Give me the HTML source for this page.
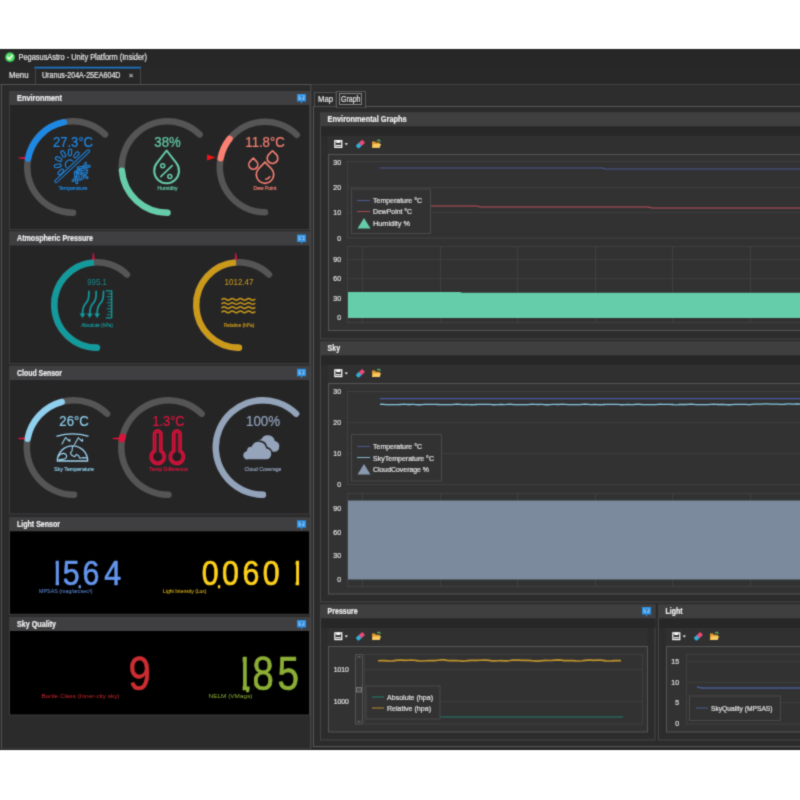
<!DOCTYPE html>
<html lang="en"><head><meta charset="utf-8"><title>PegasusAstro - Unity Platform (Insider)</title>
<style>html,body{margin:0;padding:0;background:#fff;}body{width:800px;height:800px;overflow:hidden;position:relative;}svg{position:absolute;left:0;top:0;display:block;font-family:"Liberation Sans", sans-serif;}</style>
</head><body>
<svg width="800" height="800" viewBox="0 0 800 800">
<defs><filter id="soft" x="-10" y="-10" width="820" height="820" filterUnits="userSpaceOnUse" color-interpolation-filters="sRGB"><feConvolveMatrix order="3" kernelMatrix="0.0275 0.1100 0.0275 0.1100 0.4500 0.1100 0.0275 0.1100 0.0275" edgeMode="duplicate" preserveAlpha="true"/></filter></defs>
<rect x="0" y="0" width="800" height="800" fill="#ffffff" />
<g filter="url(#soft)">
<rect x="-10" y="-10" width="820" height="820" fill="#ffffff" />
<rect x="-10" y="49" width="820" height="701" fill="#2d2d2d" />
<g id="titlebar">
<rect x="-10" y="49" width="820" height="17" fill="#272727" />
<rect x="-10" y="49" width="820" height="1" fill="#1e1e1e" />
<circle cx="10" cy="57.2" r="5" fill="#2fae48"/><circle cx="10" cy="57.2" r="3.9" fill="#5fe070"/><path d="M7.7,57.2 L9.4,59.1 L12.3,55.5" fill="none" stroke="#fff" stroke-width="1.4" stroke-linecap="round" stroke-linejoin="round"/>
<text x="18.5" y="60" font-size="9" fill="#e8e8e8" textLength="128.5" lengthAdjust="spacingAndGlyphs" stroke="#e8e8e8" stroke-width="0.2" >PegasusAstro - Unity Platform (Insider)</text>
</g>
<g id="tabs">
<rect x="-10" y="66" width="820" height="18.5" fill="#282828" />
<text x="9" y="78" font-size="8.5" fill="#e8e8e8" textLength="19.5" lengthAdjust="spacingAndGlyphs" stroke="#e8e8e8" stroke-width="0.2" >Menu</text>
<rect x="35" y="67" width="106" height="17.5" fill="#272727" />
<rect x="34.5" y="66.8" width="106.5" height="1.7" fill="#1b76c8" />
<line x1="35.5" y1="69" x2="35.5" y2="84" stroke="#464646" stroke-width="1" />
<line x1="140.5" y1="69" x2="140.5" y2="84" stroke="#464646" stroke-width="1" />
<text x="42" y="78" font-size="8.5" fill="#e8e8e8" textLength="78.5" lengthAdjust="spacingAndGlyphs" stroke="#e8e8e8" stroke-width="0.2" >Uranus-204A-25EA604D</text>
<text x="131" y="78.3" font-size="8" fill="#cccccc" text-anchor="middle" stroke="#cccccc" stroke-width="0.2" >×</text>
<line x1="-10" y1="84.5" x2="35" y2="84.5" stroke="#404040" stroke-width="1" />
<line x1="141" y1="84.5" x2="810" y2="84.5" stroke="#404040" stroke-width="1" />
</g>
<g id="left-panels">
<rect x="1.5" y="84.5" width="309.3" height="664.5" fill="#2b2b2c" stroke="#525253" stroke-width="1" />
<rect x="9.5" y="91.5" width="300" height="138.0" fill="#252526" stroke="#3c3c3d" stroke-width="1" />
<rect x="10" y="91" width="300" height="14" fill="#3f3f41" />
<text x="17" y="100.7" font-size="8.4" fill="#f0f0f0" font-weight="bold" textLength="45" lengthAdjust="spacingAndGlyphs" stroke="#f0f0f0" stroke-width="0.2" >Environment</text>
<g transform="translate(297,94)"><path d="M0,0H9V7.5H5.5L4,10V7.5H0Z" fill="#2b8fe0"/><rect x="1.5" y="1.5" width="6" height="4.5" fill="#6fb8f5"/>
<text x="4.5" y="6" font-size="5.5" fill="#1560a8" text-anchor="middle" font-weight="bold" >?</text>
</g>
<rect x="9.5" y="232.0" width="300" height="131.5" fill="#252526" stroke="#3c3c3d" stroke-width="1" />
<rect x="10" y="231.5" width="300" height="14.0" fill="#3f3f41" />
<text x="17" y="241.2" font-size="8.4" fill="#f0f0f0" font-weight="bold" textLength="76" lengthAdjust="spacingAndGlyphs" stroke="#f0f0f0" stroke-width="0.2" >Atmospheric Pressure</text>
<g transform="translate(297,234.5)"><path d="M0,0H9V7.5H5.5L4,10V7.5H0Z" fill="#2b8fe0"/><rect x="1.5" y="1.5" width="6" height="4.5" fill="#6fb8f5"/>
<text x="4.5" y="6" font-size="5.5" fill="#1560a8" text-anchor="middle" font-weight="bold" >?</text>
</g>
<rect x="9.5" y="366.3" width="300" height="147.7" fill="#252526" stroke="#3c3c3d" stroke-width="1" />
<rect x="10" y="365.8" width="300" height="14.199999999999989" fill="#3f3f41" />
<text x="17" y="375.5" font-size="8.4" fill="#f0f0f0" font-weight="bold" textLength="45" lengthAdjust="spacingAndGlyphs" stroke="#f0f0f0" stroke-width="0.2" >Cloud Sensor</text>
<g transform="translate(297,368.8)"><path d="M0,0H9V7.5H5.5L4,10V7.5H0Z" fill="#2b8fe0"/><rect x="1.5" y="1.5" width="6" height="4.5" fill="#6fb8f5"/>
<text x="4.5" y="6" font-size="5.5" fill="#1560a8" text-anchor="middle" font-weight="bold" >?</text>
</g>
<rect x="9.5" y="517.7" width="300" height="96.59999999999991" fill="#000000" stroke="#3c3c3d" stroke-width="1" />
<rect x="10" y="517.2" width="300" height="14.099999999999909" fill="#3f3f41" />
<text x="17" y="526.9000000000001" font-size="8.4" fill="#f0f0f0" font-weight="bold" textLength="43" lengthAdjust="spacingAndGlyphs" stroke="#f0f0f0" stroke-width="0.2" >Light Sensor</text>
<g transform="translate(297,520.2)"><path d="M0,0H9V7.5H5.5L4,10V7.5H0Z" fill="#2b8fe0"/><rect x="1.5" y="1.5" width="6" height="4.5" fill="#6fb8f5"/>
<text x="4.5" y="6" font-size="5.5" fill="#1560a8" text-anchor="middle" font-weight="bold" >?</text>
</g>
<rect x="9.5" y="617.5" width="300" height="97.5" fill="#000000" stroke="#3c3c3d" stroke-width="1" />
<rect x="10" y="617" width="300" height="14" fill="#3f3f41" />
<text x="17" y="626.7" font-size="8.4" fill="#f0f0f0" font-weight="bold" textLength="39" lengthAdjust="spacingAndGlyphs" stroke="#f0f0f0" stroke-width="0.2" >Sky Quality</text>
<g transform="translate(297,620)"><path d="M0,0H9V7.5H5.5L4,10V7.5H0Z" fill="#2b8fe0"/><rect x="1.5" y="1.5" width="6" height="4.5" fill="#6fb8f5"/>
<text x="4.5" y="6" font-size="5.5" fill="#1560a8" text-anchor="middle" font-weight="bold" >?</text>
</g>
</g>
<g id="environment">
<path d="M73.00,212.75 A45.75,45.75 0 1 1 105.07,134.37" fill="none" stroke="#555555" stroke-width="6.5" stroke-linecap="round"/>
<path d="M28.02,158.66 A45.75,45.75 0 0 1 63.88,122.17" fill="none" stroke="#1e88e5" stroke-width="6.3" stroke-linecap="round"/>
<text x="73" y="146.8" font-size="14" fill="#1e88e5" text-anchor="middle" textLength="40.2" lengthAdjust="spacingAndGlyphs" stroke="#1e88e5" stroke-width="0.2" opacity="1">27.3°C</text>
<text x="73" y="189.8" font-size="5" fill="#1e88e5" text-anchor="middle" textLength="29" lengthAdjust="spacingAndGlyphs" stroke="#1e88e5" stroke-width="0.15">Temperature</text>
<g stroke-linecap="round" stroke-linejoin="round">
<rect x="-1.35" y="-1.35" width="46.70" height="2.70" rx="1.35" fill="none" stroke="#1e88e5" stroke-width="1.0" transform="translate(56.16,181.26) rotate(-43.2)"/>
<path d="M66.37,167.52 A4.6,4.6 0 0 1 72.82,161.07" fill="none" stroke="#1e88e5" stroke-width="1.1"/>
<rect x="-1.60" y="-1.60" width="6.80" height="3.20" rx="1.60" fill="none" stroke="#1e88e5" stroke-width="1.1" transform="translate(62.15,170.71) rotate(136)"/>
<rect x="-1.60" y="-1.60" width="6.80" height="3.20" rx="1.60" fill="none" stroke="#1e88e5" stroke-width="1.1" transform="translate(59.53,165.52) rotate(170.5)"/>
<rect x="-1.60" y="-1.60" width="6.80" height="3.20" rx="1.60" fill="none" stroke="#1e88e5" stroke-width="1.1" transform="translate(60.32,159.76) rotate(205)"/>
<rect x="-1.60" y="-1.60" width="6.80" height="3.20" rx="1.60" fill="none" stroke="#1e88e5" stroke-width="1.1" transform="translate(64.23,155.46) rotate(239.5)"/>
<rect x="-1.60" y="-1.60" width="6.80" height="3.20" rx="1.60" fill="none" stroke="#1e88e5" stroke-width="1.1" transform="translate(69.88,154.12) rotate(274)"/>
<rect x="-1.60" y="-1.60" width="6.80" height="3.20" rx="1.60" fill="none" stroke="#1e88e5" stroke-width="1.1" transform="translate(75.30,156.23) rotate(308.5)"/>
<path d="M78.10,169.44 L83.84,170.82" fill="none" stroke="#1e88e5" stroke-width="1.2"/>
<path d="M76.48,171.67 L79.56,176.70" fill="none" stroke="#1e88e5" stroke-width="1.2"/>
<path d="M78.16,168.04 L89.22,166.28" fill="none" stroke="#1e88e5" stroke-width="2.9"/>
<path d="M78.16,168.04 L89.22,166.28" fill="none" stroke="#252526" stroke-width="0.8"/>
<path d="M83.66,167.16 L85.89,163.14" fill="none" stroke="#1e88e5" stroke-width="2.5"/>
<path d="M83.66,167.16 L85.89,163.14" fill="none" stroke="#252526" stroke-width="0.8"/>
<path d="M83.66,167.16 L87.03,170.30" fill="none" stroke="#1e88e5" stroke-width="2.5"/>
<path d="M83.66,167.16 L87.03,170.30" fill="none" stroke="#252526" stroke-width="0.8"/>
<path d="M77.51,170.72 L87.06,177.65" fill="none" stroke="#1e88e5" stroke-width="2.9"/>
<path d="M77.51,170.72 L87.06,177.65" fill="none" stroke="#252526" stroke-width="0.8"/>
<path d="M82.32,174.21 L86.75,172.94" fill="none" stroke="#1e88e5" stroke-width="2.5"/>
<path d="M82.32,174.21 L86.75,172.94" fill="none" stroke="#252526" stroke-width="0.8"/>
<path d="M82.32,174.21 L82.49,178.81" fill="none" stroke="#1e88e5" stroke-width="2.5"/>
<path d="M82.32,174.21 L82.49,178.81" fill="none" stroke="#252526" stroke-width="0.8"/>
<path d="M75.16,172.16 L76.85,182.82" fill="none" stroke="#1e88e5" stroke-width="2.9"/>
<path d="M75.16,172.16 L76.85,182.82" fill="none" stroke="#252526" stroke-width="0.8"/>
<path d="M76.00,177.42 L80.02,179.65" fill="none" stroke="#1e88e5" stroke-width="2.5"/>
<path d="M76.00,177.42 L80.02,179.65" fill="none" stroke="#252526" stroke-width="0.8"/>
<path d="M76.00,177.42 L72.86,180.78" fill="none" stroke="#1e88e5" stroke-width="2.5"/>
<path d="M76.00,177.42 L72.86,180.78" fill="none" stroke="#252526" stroke-width="0.8"/>
</g>
<path d="M167.50,212.75 A45.75,45.75 0 1 1 199.57,134.37" fill="none" stroke="#555555" stroke-width="6.5" stroke-linecap="round"/>
<path d="M167.50,212.75 A45.75,45.75 0 0 1 121.89,170.59" fill="none" stroke="#66cdaa" stroke-width="6.3" stroke-linecap="round"/>
<text x="167.5" y="146.8" font-size="14" fill="#66cdaa" text-anchor="middle" textLength="26.4" lengthAdjust="spacingAndGlyphs" stroke="#66cdaa" stroke-width="0.2" opacity="1">38%</text>
<text x="167.5" y="190.2" font-size="5" fill="#66cdaa" text-anchor="middle" textLength="20" lengthAdjust="spacingAndGlyphs" stroke="#66cdaa" stroke-width="0.15">Humidity</text>
<path d="M166.60,150.50 L156.78,163.23 A12.4,12.4 0 1 0 176.42,163.23 Z" fill="none" stroke="#66cdaa" stroke-width="2" stroke-linejoin="round"/>
<circle cx="162.7" cy="165.8" r="2" fill="none" stroke="#66cdaa" stroke-width="1.5"/>
<circle cx="169.8" cy="176.6" r="2" fill="none" stroke="#66cdaa" stroke-width="1.5"/>
<path d="M160.8,176.6 L172.2,165.6" stroke="#66cdaa" stroke-width="1.6" stroke-linecap="round"/>
<path d="M265.00,212.25 A45.25,45.25 0 1 1 296.72,134.73" fill="none" stroke="#555555" stroke-width="6.5" stroke-linecap="round"/>
<path d="M220.58,158.37 A45.25,45.25 0 0 1 229.59,138.83" fill="none" stroke="#fa8072" stroke-width="6.3" stroke-linecap="round"/>
<text x="265" y="146.8" font-size="14" fill="#fa8072" text-anchor="middle" textLength="39.4" lengthAdjust="spacingAndGlyphs" stroke="#fa8072" stroke-width="0.2" opacity="1">11.8°C</text>
<text x="265" y="189.8" font-size="5" fill="#fa8072" text-anchor="middle" textLength="22.8" lengthAdjust="spacingAndGlyphs" stroke="#fa8072" stroke-width="0.15">Dew Point</text>
<path d="M272.50,150.80 L268.80,154.40 A5.3,5.3 0 1 0 276.20,154.40 Z" fill="none" stroke="#fa8072" stroke-width="1.6" stroke-linejoin="round"/>
<path d="M253.30,158.00 L250.01,161.53 A4.5,4.5 0 1 0 256.59,161.53 Z" fill="none" stroke="#fa8072" stroke-width="1.6" stroke-linejoin="round"/>
<path d="M265.00,162.20 L258.80,168.50 A8.7,8.7 0 1 0 271.20,168.50 Z" fill="none" stroke="#fa8072" stroke-width="1.7" stroke-linejoin="round"/>
<path d="M265.8,179.3 Q268.6,178.8 269.8,176.6" fill="none" stroke="#fa8072" stroke-width="1.5" stroke-linecap="round"/>
<path d="M18.6,157.5 L25.1,156.9 L25.1,159.1 L18.6,158.5Z" fill="#e2123c"/>
<path d="M207,154.4 L215.6,157.5 L207,160.6 Z" fill="#f01414"/>
</g>
<g id="atmospheric-pressure">
<path d="M97.00,347.75 A42.75,42.75 0 1 1 126.96,274.51" fill="none" stroke="#555555" stroke-width="6.5" stroke-linecap="round"/>
<path d="M97.00,347.75 A42.75,42.75 0 0 1 95.51,347.72" fill="none" stroke="#139a9c" stroke-width="6.3" stroke-linecap="round"/>
<path d="M97.00,347.75 A42.75,42.75 0 0 1 94.02,262.35" fill="none" stroke="#139a9c" stroke-width="6.3" stroke-linecap="butt"/>
<text x="97" y="284.8" font-size="8.5" fill="#139a9c" text-anchor="middle" textLength="19.5" lengthAdjust="spacingAndGlyphs" stroke="#139a9c" stroke-width="0" opacity="0.85">995.1</text>
<text x="97" y="327.4" font-size="5" fill="#139a9c" text-anchor="middle" textLength="31.7" lengthAdjust="spacingAndGlyphs" stroke="#139a9c" stroke-width="0.15">Absolute (hPa)</text>
<path d="M88.9,291.4 C88.9,298 88.5,300.5 85.7,303.4 C82.9,306.4 82.5,308.6 82.5,314" fill="none" stroke="#139a9c" stroke-width="1.7" stroke-linecap="round"/>
<path d="M79.5,313.4 h6 l-3,4.6z" fill="#139a9c"/>
<path d="M96.2,291.4 C96.2,298 95.8,300.5 93.0,303.4 C90.2,306.4 89.8,308.6 89.8,314" fill="none" stroke="#139a9c" stroke-width="1.7" stroke-linecap="round"/>
<path d="M86.8,313.4 h6 l-3,4.6z" fill="#139a9c"/>
<path d="M103.5,291.4 C103.5,298 103.1,300.5 100.3,303.4 C97.5,306.4 97.1,308.6 97.1,314" fill="none" stroke="#139a9c" stroke-width="1.7" stroke-linecap="round"/>
<path d="M94.1,313.4 h6 l-3,4.6z" fill="#139a9c"/>
<path d="M111.7,290.6 V318 M105.8,290.8 H111.7 M105.8,317.8 H111.7" fill="none" stroke="#139a9c" stroke-width="1.3"/>
<path d="M108.0,293.80 H111.7" stroke="#139a9c" stroke-width="0.9"/>
<path d="M106.8,296.80 H111.7" stroke="#139a9c" stroke-width="0.9"/>
<path d="M108.0,299.80 H111.7" stroke="#139a9c" stroke-width="0.9"/>
<path d="M106.8,302.80 H111.7" stroke="#139a9c" stroke-width="0.9"/>
<path d="M108.0,305.80 H111.7" stroke="#139a9c" stroke-width="0.9"/>
<path d="M106.8,308.80 H111.7" stroke="#139a9c" stroke-width="0.9"/>
<path d="M108.0,311.80 H111.7" stroke="#139a9c" stroke-width="0.9"/>
<path d="M106.8,314.80 H111.7" stroke="#139a9c" stroke-width="0.9"/>
<path d="M239.00,347.75 A42.75,42.75 0 1 1 268.96,274.51" fill="none" stroke="#555555" stroke-width="6.5" stroke-linecap="round"/>
<path d="M239.00,347.75 A42.75,42.75 0 0 1 237.51,347.72" fill="none" stroke="#cc9a1a" stroke-width="6.3" stroke-linecap="round"/>
<path d="M239.00,347.75 A42.75,42.75 0 0 1 236.02,262.35" fill="none" stroke="#cc9a1a" stroke-width="6.3" stroke-linecap="butt"/>
<text x="239" y="284.8" font-size="8.5" fill="#cc9a1a" text-anchor="middle" textLength="28.9" lengthAdjust="spacingAndGlyphs" stroke="#cc9a1a" stroke-width="0.1" opacity="0.95">1012.47</text>
<text x="239" y="327.4" font-size="5" fill="#cc9a1a" text-anchor="middle" textLength="30.5" lengthAdjust="spacingAndGlyphs" stroke="#cc9a1a" stroke-width="0.15">Relative (hPa)</text>
<path d="M222,299.4 q2.05,-1.6 4.10,0 t4.10,0 t4.10,0 t4.10,0 t4.10,0 t4.10,0 t4.10,0 t4.10,0 " fill="none" stroke="#cc9a1a" stroke-width="1.5" stroke-linecap="round"/>
<path d="M222,303.5 q2.05,-1.6 4.10,0 t4.10,0 t4.10,0 t4.10,0 t4.10,0 t4.10,0 t4.10,0 t4.10,0 " fill="none" stroke="#cc9a1a" stroke-width="1.5" stroke-linecap="round"/>
<path d="M222,307.6 q2.05,-1.6 4.10,0 t4.10,0 t4.10,0 t4.10,0 t4.10,0 t4.10,0 t4.10,0 t4.10,0 " fill="none" stroke="#cc9a1a" stroke-width="1.5" stroke-linecap="round"/>
<path d="M222,311.9 q2.05,-1.6 4.10,0 t4.10,0 t4.10,0 t4.10,0 t4.10,0 t4.10,0 t4.10,0 t4.10,0 " fill="none" stroke="#cc9a1a" stroke-width="1.5" stroke-linecap="round"/>
<path d="M93.2,253.2 L94.4,259.4 L92.8,259.4Z" fill="#e2123c" stroke="#e2123c" stroke-width="0.8" stroke-linejoin="round"/>
<path d="M235.6,253.2 L236.8,259.4 L235.2,259.4Z" fill="#e2123c" stroke="#e2123c" stroke-width="0.8" stroke-linejoin="round"/>
</g>
<g id="cloud-sensor">
<path d="M74.00,494.75 A47.25,47.25 0 1 1 107.12,413.80" fill="none" stroke="#555555" stroke-width="6.5" stroke-linecap="round"/>
<path d="M27.54,438.89 A47.25,47.25 0 0 1 61.77,401.86" fill="none" stroke="#8fd0ee" stroke-width="6.3" stroke-linecap="round"/>
<text x="74" y="426.4" font-size="14" fill="#8fd0ee" text-anchor="middle" textLength="29.3" lengthAdjust="spacingAndGlyphs" stroke="#8fd0ee" stroke-width="0.2" opacity="1">26°C</text>
<text x="74" y="471" font-size="5.5" fill="#8fd0ee" text-anchor="middle" textLength="39.9" lengthAdjust="spacingAndGlyphs" stroke="#8fd0ee" stroke-width="0.15">Sky Temperature</text>
<g fill="none" stroke="#9dd3f0" stroke-width="1.1" stroke-linecap="round" stroke-linejoin="round">
<path d="M57,436.2 Q72.5,431.6 88,436.2" stroke-width="1.3"/>
<path d="M62,444 L65.6,437.6 L69.6,441.2 M68,440.2 L69.8,441.3 L69.9,439.2"/>
<path d="M74.5,444.6 L78.4,437.8 L82.3,441.2 M80.7,440.2 L82.5,441.3 L82.6,439.2"/>
<path d="M57.3,461 A15.2,15.2 0 0 1 87.7,461 Z" stroke-width="1.3"/>
<path d="M72.6,446.2 L72,451 L70.4,452.8 L71.4,455 L74.6,456.8 L76.4,454.4 L78.6,455.8 L79.8,458.2 L84,457.6 L87,458"/>
<path d="M58.4,456.6 Q60,453.2 63.6,453.4 Q67,454 66.6,457 Q65.4,459.6 62.6,459.4 L59,459.6"/>
</g>
<path d="M168.50,494.75 A47.25,47.25 0 1 1 201.62,413.80" fill="none" stroke="#555555" stroke-width="6.5" stroke-linecap="round"/>
<path d="M121.97,439.30 A47.25,47.25 0 0 1 122.52,436.63" fill="none" stroke="#dc143c" stroke-width="6.3" stroke-linecap="round"/>
<text x="168.5" y="426.4" font-size="14" fill="#dc143c" text-anchor="middle" textLength="32" lengthAdjust="spacingAndGlyphs" stroke="#dc143c" stroke-width="0.2" opacity="1">1.3°C</text>
<text x="168.5" y="471" font-size="5.5" fill="#dc143c" text-anchor="middle" textLength="39" lengthAdjust="spacingAndGlyphs" stroke="#dc143c" stroke-width="0.15">Temp Difference</text>
<path d="M154.5,451.0 V434.2 a3.2,3.2 0 0 1 6.4,0 V451.0 a6.6,6.6 0 1 1 -6.4,0 Z" fill="none" stroke="#dc143c" stroke-width="3.6" stroke-linejoin="round"/>
<path d="M154.5,451.0 V434.2 a3.2,3.2 0 0 1 6.4,0 V451.0 a6.6,6.6 0 1 1 -6.4,0 Z" fill="none" stroke="#8a0d28" stroke-width="0.7" stroke-linejoin="round"/>
<path d="M157.7,433 V452" stroke="#7a1028" stroke-width="0.8" stroke-dasharray="1.2 1.2"/>
<circle cx="157.7" cy="457" r="3.4" fill="#2a1a20"/>
<path d="M173.70000000000002,451.0 V434.2 a3.2,3.2 0 0 1 6.4,0 V451.0 a6.6,6.6 0 1 1 -6.4,0 Z" fill="none" stroke="#dc143c" stroke-width="3.6" stroke-linejoin="round"/>
<path d="M173.70000000000002,451.0 V434.2 a3.2,3.2 0 0 1 6.4,0 V451.0 a6.6,6.6 0 1 1 -6.4,0 Z" fill="none" stroke="#8a0d28" stroke-width="0.7" stroke-linejoin="round"/>
<path d="M176.9,433 V452" stroke="#7a1028" stroke-width="0.8" stroke-dasharray="1.2 1.2"/>
<circle cx="176.9" cy="457" r="3.4" fill="#2a1a20"/>
<path d="M263.00,494.75 A47.25,47.25 0 1 1 296.12,413.80" fill="none" stroke="#555555" stroke-width="6.5" stroke-linecap="round"/>
<path d="M263.00,494.75 A47.25,47.25 0 1 1 296.12,413.80" fill="none" stroke="#92a3ba" stroke-width="6.3" stroke-linecap="round"/>
<text x="263" y="426.4" font-size="14" fill="#92a3ba" text-anchor="middle" textLength="34" lengthAdjust="spacingAndGlyphs" stroke="#92a3ba" stroke-width="0.2" opacity="1">100%</text>
<text x="263" y="471" font-size="5.5" fill="#92a3ba" text-anchor="middle" textLength="36.8" lengthAdjust="spacingAndGlyphs" stroke="#92a3ba" stroke-width="0.15">Cloud Coverage</text>
<path d="M6.5,17.5 H21.5 A5.5,5.5 0 0 0 22.2,6.6 A7.2,7.2 0 0 0 8.6,5.2 A4.4,4.4 0 0 0 4.2,9.2 A4.3,4.3 0 0 0 6.5,17.5 Z" fill="#95a4ba" transform="translate(252.6,434.3) scale(1.0)"/>
<path d="M6.5,17.5 H21.5 A5.5,5.5 0 0 0 22.2,6.6 A7.2,7.2 0 0 0 8.6,5.2 A4.4,4.4 0 0 0 4.2,9.2 A4.3,4.3 0 0 0 6.5,17.5 Z" fill="#95a4ba" stroke="#252526" stroke-width="1.39" transform="translate(241.3,440.0) scale(1.15)"/>
<path d="M18.2,438.0 L24.7,437.4 L24.7,439.6 L18.2,439.0Z" fill="#e2123c"/>
<path d="M112.6,438.0 L119.1,437.4 L119.1,439.6 L112.6,439.0Z" fill="#e2123c"/>
</g>
<g id="light-and-sky-quality">
<text transform="scale(0.843,1)" font-size="36" fill="#6495ed" stroke="#6495ed" stroke-width="0.7" stroke-linejoin="round"><tspan x="57.17" y="585.30">1</tspan><tspan x="74.48" y="585.30">5</tspan><tspan x="91.60" y="587.90" font-size="22.0">.</tspan><tspan x="97.81" y="585.30">6</tspan><tspan x="123.73" y="585.30">4</tspan></text>
<text transform="scale(0.843,1)" font-size="36" fill="#ffd21a" stroke="#ffd21a" stroke-width="0.7" stroke-linejoin="round"><tspan x="239.40" y="585.30">0</tspan><tspan x="256.97" y="587.90" font-size="22.0">.</tspan><tspan x="263.48" y="585.30">0</tspan><tspan x="287.61" y="585.30">6</tspan><tspan x="311.76" y="585.30">0</tspan><tspan x="342.46" y="585.30">1</tspan></text>
<text transform="scale(0.85,1)" font-size="47.3" fill="#cd2d32" stroke="#cd2d32" stroke-width="0.7" stroke-linejoin="round"><tspan x="151.19" y="689.80">9</tspan></text>
<text transform="scale(0.82,1)" font-size="47.3" fill="#8cae35" stroke="#8cae35" stroke-width="0.7" stroke-linejoin="round"><tspan x="284.82" y="689.80">1</tspan><tspan x="298.06" y="692.40" font-size="28.0">.</tspan><tspan x="307.72" y="689.80">8</tspan><tspan x="338.35" y="689.80">5</tspan></text>
<rect x="43" y="556" width="12.6" height="31.5" fill="#000000" />
<rect x="59.1" y="556" width="4.5" height="31.5" fill="#000000" />
<rect x="59.1" y="583" width="5.2" height="5" fill="#000000" />
<rect x="283" y="556" width="12.6" height="31.5" fill="#000000" />
<rect x="299.1" y="556" width="9.5" height="31.5" fill="#000000" />
<rect x="229" y="652" width="13.6" height="40" fill="#000000" />
<rect x="246.9" y="652" width="7" height="34.4" fill="#000000" />
<rect x="249.6" y="685.6" width="4.2" height="7" fill="#000000" />
<text x="39" y="593" font-size="5.5" fill="#6495ed" textLength="53.5" lengthAdjust="spacingAndGlyphs" >MPSAS (mag/arcsec²)</text>
<text x="163" y="593" font-size="5.5" fill="#ffd21a" textLength="43.5" lengthAdjust="spacingAndGlyphs" >Light Intensity (Lux)</text>
<text x="41.5" y="698" font-size="6" fill="#c8262c" textLength="78" lengthAdjust="spacingAndGlyphs" >Bortle Class (Inner-city sky)</text>
<text x="208.5" y="698" font-size="6" fill="#8cae35" textLength="44" lengthAdjust="spacingAndGlyphs" >NELM (VMags)</text>
</g>
<g id="graph-tabs">
<rect x="313.5" y="106.5" width="500" height="640" fill="#2b2b2c" stroke="#565657" stroke-width="1" />
<rect x="314.5" y="92.5" width="21.5" height="14" fill="#2b2b2c" stroke="#4e4e4f" stroke-width="1" />
<text x="318" y="102.3" font-size="8.5" fill="#e8e8e8" textLength="15" lengthAdjust="spacingAndGlyphs" stroke="#e8e8e8" stroke-width="0.2" >Map</text>
<rect x="336.5" y="91.5" width="29" height="16" fill="#2b2b2c" stroke="#5a5a5b" stroke-width="1" />
<rect x="337" y="106" width="28" height="1.5" fill="#2b2b2c" />
<rect x="339.5" y="93.5" width="22" height="11" fill="none" stroke="#e0e0e0" stroke-width="1" stroke-dasharray="1 1"/>
<text x="341" y="102.3" font-size="8.5" fill="#e8e8e8" textLength="19.5" lengthAdjust="spacingAndGlyphs" stroke="#e8e8e8" stroke-width="0.2" >Graph</text>
</g>
<g id="environmental-graphs">
<rect x="320.5" y="113.0" width="490" height="226" fill="#2c2c2d" stroke="#464647" stroke-width="1" />
<rect x="320" y="112.5" width="491" height="14" fill="#3f3f40" />
<rect x="321" y="126.5" width="490" height="9.3" fill="#272728" />
<text x="327.6" y="122.1" font-size="8.5" fill="#f0f0f0" font-weight="bold" textLength="79" lengthAdjust="spacingAndGlyphs" stroke="#f0f0f0" stroke-width="0.2" >Environmental Graphs</text>
<rect x="328" y="135.8" width="480" height="18" fill="#303031" />
<g transform="translate(334.3,140.10000000000002)"><rect x="0.55" y="0.55" width="6.9" height="6.7" fill="none" stroke="#ffffff" stroke-width="1.25"/><rect x="2" y="0.4" width="4" height="2.4" fill="#ffffff"/><rect x="1.6" y="4.8" width="4.8" height="1.2" fill="#ffffff"/><path d="M10.4,3.2 h3.2 l-1.6,1.9z" fill="#ffffff"/></g>
<g transform="translate(360.4,144.20000000000002) rotate(-42)"><rect x="-4.6" y="-2.1" width="5" height="4.2" rx="1.1" fill="#2fb0d8"/><rect x="-0.5" y="-2.1" width="5" height="4.2" rx="1.1" fill="#ea4a78"/></g>
<g transform="translate(372,139.8) scale(0.88)"><path d="M0,1.8 h3.4 l1,1.2 h4.6 v6 h-9z" fill="#e09a30"/><path d="M1.6,4.8 h8.8 l-1.8,4.2 h-8.6z" fill="#f7cb62"/><path d="M5.6,1.2 l2.4,-1 l1.6,1.8" fill="none" stroke="#58b858" stroke-width="1.3"/></g>
<rect x="328.5" y="154.5" width="480" height="176" fill="#323233" stroke="#555556" stroke-width="1" />
<rect x="347.5" y="161.5" width="460" height="76.5" fill="none" stroke="#404041" stroke-width="1" />
<line x1="348" y1="187.5" x2="810" y2="187.5" stroke="#3d3d3e" stroke-width="1" />
<line x1="348" y1="212.5" x2="810" y2="212.5" stroke="#3d3d3e" stroke-width="1" />
<text x="341" y="164.9" font-size="8" fill="#e4e4e4" text-anchor="end" textLength="7.7" lengthAdjust="spacingAndGlyphs" stroke="#e4e4e4" stroke-width="0.2" >30</text>
<text x="341" y="190.4" font-size="8" fill="#e4e4e4" text-anchor="end" textLength="7.7" lengthAdjust="spacingAndGlyphs" stroke="#e4e4e4" stroke-width="0.2" >20</text>
<text x="341" y="215.4" font-size="8" fill="#e4e4e4" text-anchor="end" textLength="7.7" lengthAdjust="spacingAndGlyphs" stroke="#e4e4e4" stroke-width="0.2" >10</text>
<text x="341" y="240.9" font-size="8" fill="#e4e4e4" text-anchor="end" textLength="3.85" lengthAdjust="spacingAndGlyphs" stroke="#e4e4e4" stroke-width="0.2" >0</text>
<polyline points="380,168 602,168 606,169 810,169" fill="none" stroke="#485a94" stroke-width="1.2"/>
<polyline points="380,206 477,206 480,207 648,207 652,208 810,208" fill="none" stroke="#bc4e56" stroke-width="1.2"/>
<rect x="351.5" y="189.0" width="79" height="44.5" fill="#323233" stroke="#484849" stroke-width="1" />
<line x1="357" y1="200.5" x2="370" y2="200.5" stroke="#4c5c90" stroke-width="1" />
<text x="373" y="203.3" font-size="8" fill="#e4e4e4" textLength="49" lengthAdjust="spacingAndGlyphs" stroke="#e4e4e4" stroke-width="0.2" >Temperature °C</text>
<line x1="357" y1="211.5" x2="370" y2="211.5" stroke="#a8484e" stroke-width="1" />
<text x="373" y="214.3" font-size="8" fill="#e4e4e4" textLength="39" lengthAdjust="spacingAndGlyphs" stroke="#e4e4e4" stroke-width="0.2" >DewPoint °C</text>
<path d="M357.5,228.5 L364,218 L370.5,228.5Z" fill="#66cdaa"/>
<text x="373" y="226" font-size="8" fill="#e4e4e4" textLength="37" lengthAdjust="spacingAndGlyphs" stroke="#e4e4e4" stroke-width="0.2" >Humidity %</text>
<rect x="347.5" y="246.5" width="460" height="76" fill="none" stroke="#404041" stroke-width="1" />
<line x1="362.5" y1="247" x2="362.5" y2="322" stroke="#404041" stroke-width="1" />
<line x1="440.5" y1="247" x2="440.5" y2="322" stroke="#404041" stroke-width="1" />
<line x1="517.5" y1="247" x2="517.5" y2="322" stroke="#404041" stroke-width="1" />
<line x1="595.5" y1="247" x2="595.5" y2="322" stroke="#404041" stroke-width="1" />
<line x1="672.5" y1="247" x2="672.5" y2="322" stroke="#404041" stroke-width="1" />
<line x1="750.5" y1="247" x2="750.5" y2="322" stroke="#404041" stroke-width="1" />
<line x1="348" y1="259.5" x2="810" y2="259.5" stroke="#3d3d3e" stroke-width="1" />
<line x1="348" y1="278.5" x2="810" y2="278.5" stroke="#3d3d3e" stroke-width="1" />
<path d="M348,292 L460,292 L462,292.8 L810,292.8 L810,318 L348,318Z" fill="#66cdaa"/>
<text x="341" y="261.9" font-size="8" fill="#e4e4e4" text-anchor="end" textLength="7.7" lengthAdjust="spacingAndGlyphs" stroke="#e4e4e4" stroke-width="0.2" >90</text>
<text x="341" y="281.4" font-size="8" fill="#e4e4e4" text-anchor="end" textLength="7.7" lengthAdjust="spacingAndGlyphs" stroke="#e4e4e4" stroke-width="0.2" >60</text>
<text x="341" y="300.9" font-size="8" fill="#e4e4e4" text-anchor="end" textLength="7.7" lengthAdjust="spacingAndGlyphs" stroke="#e4e4e4" stroke-width="0.2" >30</text>
<text x="341" y="320.4" font-size="8" fill="#e4e4e4" text-anchor="end" textLength="3.85" lengthAdjust="spacingAndGlyphs" stroke="#e4e4e4" stroke-width="0.2" >0</text>
</g>
<g id="sky-graph">
<rect x="320.5" y="342.0" width="490" height="260" fill="#2c2c2d" stroke="#464647" stroke-width="1" />
<rect x="320" y="341.5" width="491" height="14" fill="#3f3f40" />
<rect x="321" y="355.5" width="490" height="9.3" fill="#272728" />
<text x="327.6" y="351.1" font-size="8.5" fill="#f0f0f0" font-weight="bold" textLength="12.5" lengthAdjust="spacingAndGlyphs" stroke="#f0f0f0" stroke-width="0.2" >Sky</text>
<rect x="328" y="365" width="480" height="18" fill="#303031" />
<g transform="translate(334.3,369.3)"><rect x="0.55" y="0.55" width="6.9" height="6.7" fill="none" stroke="#ffffff" stroke-width="1.25"/><rect x="2" y="0.4" width="4" height="2.4" fill="#ffffff"/><rect x="1.6" y="4.8" width="4.8" height="1.2" fill="#ffffff"/><path d="M10.4,3.2 h3.2 l-1.6,1.9z" fill="#ffffff"/></g>
<g transform="translate(360.4,373.4) rotate(-42)"><rect x="-4.6" y="-2.1" width="5" height="4.2" rx="1.1" fill="#2fb0d8"/><rect x="-0.5" y="-2.1" width="5" height="4.2" rx="1.1" fill="#ea4a78"/></g>
<g transform="translate(372,369) scale(0.88)"><path d="M0,1.8 h3.4 l1,1.2 h4.6 v6 h-9z" fill="#e09a30"/><path d="M1.6,4.8 h8.8 l-1.8,4.2 h-8.6z" fill="#f7cb62"/><path d="M5.6,1.2 l2.4,-1 l1.6,1.8" fill="none" stroke="#58b858" stroke-width="1.3"/></g>
<rect x="328.5" y="383.5" width="480" height="210.5" fill="#323233" stroke="#555556" stroke-width="1" />
<rect x="347.5" y="391.5" width="460" height="93" fill="none" stroke="#404041" stroke-width="1" />
<line x1="348" y1="422.5" x2="810" y2="422.5" stroke="#3d3d3e" stroke-width="1" />
<line x1="348" y1="453.5" x2="810" y2="453.5" stroke="#3d3d3e" stroke-width="1" />
<text x="341" y="393.9" font-size="8" fill="#e4e4e4" text-anchor="end" textLength="7.7" lengthAdjust="spacingAndGlyphs" stroke="#e4e4e4" stroke-width="0.2" >30</text>
<text x="341" y="425.4" font-size="8" fill="#e4e4e4" text-anchor="end" textLength="7.7" lengthAdjust="spacingAndGlyphs" stroke="#e4e4e4" stroke-width="0.2" >20</text>
<text x="341" y="456.4" font-size="8" fill="#e4e4e4" text-anchor="end" textLength="7.7" lengthAdjust="spacingAndGlyphs" stroke="#e4e4e4" stroke-width="0.2" >10</text>
<text x="341" y="487.4" font-size="8" fill="#e4e4e4" text-anchor="end" textLength="3.85" lengthAdjust="spacingAndGlyphs" stroke="#e4e4e4" stroke-width="0.2" >0</text>
<polyline points="380,398.6 810,398.6" fill="none" stroke="#4a5aa0" stroke-width="1.2"/>
<polyline points="380,404.28 382,404.24 384,404.37 386,404.58 388,404.67 390,404.61 392,404.54 394,404.58 396,404.67 398,404.67 400,404.51 402,404.31 404,404.25 406,404.35 408,404.48 410,404.50 412,404.44 414,404.45 416,404.59 418,404.75 420,404.76 422,404.60 424,404.43 426,404.38 428,404.45 430,404.47 432,404.38 434,404.28 436,404.32 438,404.51 440,404.69 442,404.72 444,404.61 446,404.53 448,404.56 450,404.62 452,404.56 454,404.39 456,404.24 458,404.26 460,404.42 462,404.56 464,404.56 466,404.50 468,404.53 470,404.66 472,404.76 474,404.68 476,404.48 478,404.33 480,404.34 482,404.43 484,404.46 486,404.38 488,404.33 490,404.44 492,404.64 494,404.76 496,404.71 498,404.56 500,404.47 502,404.51 504,404.55 506,404.46 508,404.30 510,404.23 512,404.34 514,404.54 516,404.64 518,404.60 520,404.54 522,404.57 524,404.68 526,404.70 528,404.55 530,404.35 532,404.26 534,404.34 536,404.46 538,404.48 540,404.42 542,404.42 544,404.56 546,404.73 548,404.77 550,404.64 552,404.46 554,404.41 556,404.46 558,404.48 560,404.39 562,404.27 564,404.29 566,404.46 568,404.66 570,404.70 572,404.62 574,404.54 576,404.57 578,404.64 580,404.60 582,404.42 584,404.25 586,404.25 588,404.39 590,404.53 592,404.54 594,404.48 596,404.51 598,404.64 600,404.76 602,404.71 604,404.52 606,404.36 608,404.35 610,404.43 612,404.46 614,404.37 616,404.31 618,404.40 620,404.60 622,404.75 624,404.72 626,404.58 628,404.50 630,404.53 632,404.57 634,404.49 636,404.32 638,404.22 640,404.31 642,404.50 644,404.61 646,404.59 648,404.53 650,404.56 652,404.68 654,404.72 656,404.60 658,404.39 660,404.27 662,404.33 664,404.44 666,404.47 668,404.40 670,404.39 672,404.52 674,404.71 676,404.78 678,404.66 680,404.49 682,404.43 684,404.48 686,404.50 688,404.41 690,404.27 692,404.26 694,404.42 696,404.62 698,404.69 700,404.62 702,404.54 704,404.58 706,404.66 708,404.63 710,404.46 712,404.28 714,404.24 716,404.37 718,404.50 720,404.52 722,404.46 724,404.48 726,404.62 728,404.76 730,404.74 732,404.56 734,404.39 736,404.36 738,404.44 740,404.46 742,404.37 744,404.29 746,404.36 748,404.56 750,404.72 752,404.32 754,404.19 756,404.11 758,404.15 760,404.20 762,404.13 764,403.95 766,403.82 768,403.88 770,404.06 772,404.19 774,404.17 776,404.11 778,404.15 780,404.28 782,404.34 784,404.24 786,404.03 788,403.90 790,403.93 792,404.04 794,404.06 796,403.99 798,403.96 800,404.08 802,404.28 804,404.37 806,404.29 808,404.12 810,404.05" fill="none" stroke="#86c6de" stroke-width="1.3" stroke-linejoin="round"/>
<rect x="351.5" y="434.5" width="90" height="46.5" fill="#323233" stroke="#484849" stroke-width="1" />
<line x1="357" y1="446.5" x2="370" y2="446.5" stroke="#48568c" stroke-width="1" />
<text x="373" y="449.3" font-size="8" fill="#e4e4e4" textLength="49" lengthAdjust="spacingAndGlyphs" stroke="#e4e4e4" stroke-width="0.2" >Temperature °C</text>
<line x1="357" y1="457.5" x2="370" y2="457.5" stroke="#86b8cc" stroke-width="1" />
<text x="373" y="460.5" font-size="8" fill="#e4e4e4" textLength="61" lengthAdjust="spacingAndGlyphs" stroke="#e4e4e4" stroke-width="0.2" >SkyTemperature °C</text>
<path d="M357.5,474.5 L364,464 L370.5,474.5Z" fill="#8899b0"/>
<text x="373" y="472" font-size="8" fill="#e4e4e4" textLength="56" lengthAdjust="spacingAndGlyphs" stroke="#e4e4e4" stroke-width="0.2" >CloudCoverage %</text>
<rect x="347.5" y="493.5" width="460" height="93" fill="none" stroke="#404041" stroke-width="1" />
<line x1="362.5" y1="494" x2="362.5" y2="586" stroke="#404041" stroke-width="1" />
<line x1="440.5" y1="494" x2="440.5" y2="586" stroke="#404041" stroke-width="1" />
<line x1="517.5" y1="494" x2="517.5" y2="586" stroke="#404041" stroke-width="1" />
<line x1="595.5" y1="494" x2="595.5" y2="586" stroke="#404041" stroke-width="1" />
<line x1="672.5" y1="494" x2="672.5" y2="586" stroke="#404041" stroke-width="1" />
<line x1="750.5" y1="494" x2="750.5" y2="586" stroke="#404041" stroke-width="1" />
<rect x="348" y="500.5" width="460" height="79" fill="#7b8b9d" />
<text x="341" y="510.9" font-size="8" fill="#e4e4e4" text-anchor="end" textLength="7.7" lengthAdjust="spacingAndGlyphs" stroke="#e4e4e4" stroke-width="0.2" >90</text>
<text x="341" y="534.6" font-size="8" fill="#e4e4e4" text-anchor="end" textLength="7.7" lengthAdjust="spacingAndGlyphs" stroke="#e4e4e4" stroke-width="0.2" >60</text>
<text x="341" y="558.4" font-size="8" fill="#e4e4e4" text-anchor="end" textLength="7.7" lengthAdjust="spacingAndGlyphs" stroke="#e4e4e4" stroke-width="0.2" >30</text>
<text x="341" y="581.9" font-size="8" fill="#e4e4e4" text-anchor="end" textLength="3.85" lengthAdjust="spacingAndGlyphs" stroke="#e4e4e4" stroke-width="0.2" >0</text>
</g>
<g id="pressure-graph">
<rect x="320.5" y="605.0" width="334.5" height="135" fill="#2c2c2d" stroke="#464647" stroke-width="1" />
<rect x="320" y="604.5" width="335.5" height="14" fill="#3f3f40" />
<rect x="321" y="618.5" width="334.5" height="9.3" fill="#272728" />
<text x="327.6" y="614.1" font-size="8.5" fill="#f0f0f0" font-weight="bold" textLength="30" lengthAdjust="spacingAndGlyphs" stroke="#f0f0f0" stroke-width="0.2" >Pressure</text>
<g transform="translate(642.0,607.1)"><path d="M0,0H9V7.5H5.5L4,10V7.5H0Z" fill="#2b8fe0"/><rect x="1.5" y="1.5" width="6" height="4.5" fill="#6fb8f5"/>
<text x="4.5" y="6" font-size="5.5" fill="#1560a8" text-anchor="middle" font-weight="bold" >?</text>
</g>
<rect x="328" y="628" width="319.5" height="18" fill="#303031" />
<g transform="translate(334.3,632.3)"><rect x="0.55" y="0.55" width="6.9" height="6.7" fill="none" stroke="#ffffff" stroke-width="1.25"/><rect x="2" y="0.4" width="4" height="2.4" fill="#ffffff"/><rect x="1.6" y="4.8" width="4.8" height="1.2" fill="#ffffff"/><path d="M10.4,3.2 h3.2 l-1.6,1.9z" fill="#ffffff"/></g>
<g transform="translate(360.4,636.4) rotate(-42)"><rect x="-4.6" y="-2.1" width="5" height="4.2" rx="1.1" fill="#2fb0d8"/><rect x="-0.5" y="-2.1" width="5" height="4.2" rx="1.1" fill="#ea4a78"/></g>
<g transform="translate(372,632) scale(0.88)"><path d="M0,1.8 h3.4 l1,1.2 h4.6 v6 h-9z" fill="#e09a30"/><path d="M1.6,4.8 h8.8 l-1.8,4.2 h-8.6z" fill="#f7cb62"/><path d="M5.6,1.2 l2.4,-1 l1.6,1.8" fill="none" stroke="#58b858" stroke-width="1.3"/></g>
<rect x="328.5" y="646.5" width="319" height="85.5" fill="#323233" stroke="#555556" stroke-width="1" />
<rect x="364.5" y="654.5" width="278" height="69.5" fill="none" stroke="#404041" stroke-width="1" />
<line x1="365" y1="669.5" x2="642" y2="669.5" stroke="#3d3d3e" stroke-width="1" />
<line x1="365" y1="701.5" x2="642" y2="701.5" stroke="#3d3d3e" stroke-width="1" />
<text x="348.8" y="671.6" font-size="8" fill="#e4e4e4" text-anchor="end" textLength="15" lengthAdjust="spacingAndGlyphs" stroke="#e4e4e4" stroke-width="0.2" >1010</text>
<text x="348.8" y="704.4" font-size="8" fill="#e4e4e4" text-anchor="end" textLength="15" lengthAdjust="spacingAndGlyphs" stroke="#e4e4e4" stroke-width="0.2" >1000</text>
<rect x="355.5" y="654.5" width="7" height="69.5" fill="#343435" stroke="#525254" stroke-width="1" />
<rect x="356.5" y="687.5" width="5" height="4.5" fill="#4c4c4e" stroke="#767678" stroke-width="1" />
<path d="M357.4,657.8 l1.6,-1.6 l1.6,1.6 M357.4,720.8 l1.6,1.6 l1.6,-1.6" fill="none" stroke="#8a8a8c" stroke-width="0.8"/>
<polyline points="378,660.75 381,660.72 384,660.67 387,660.82 390,660.99 393,660.84 396,660.41 399,660.10 402,660.13 405,660.28 408,660.27 411,660.15 414,660.27 417,660.67 420,661.01 423,660.98 426,660.73 429,660.61 432,660.67 435,660.60 438,660.27 441,659.94 444,659.97 447,660.29 450,660.54 453,660.53 456,660.53 459,660.76 462,661.04 465,661.02 468,660.65 471,660.32 474,660.27 477,660.35 480,660.24 483,660.03 486,660.05 489,660.42 492,660.82 495,660.90 498,660.75 501,660.71 504,660.84 507,660.83 510,660.49 513,660.08 516,659.98 519,660.19 522,660.37 525,660.34 528,660.33 531,660.59 534,660.97 537,661.08 540,660.83 543,660.53 546,660.47 549,660.51 552,660.35 555,660.03 558,659.92 561,660.20 564,660.59 567,660.72 570,660.65 573,660.69 576,660.91 579,661.01 582,660.73 585,660.30 588,660.11 591,660.21 594,660.30 597,660.19 600,660.12 603,660.36 606,660.79 609,661.02 612,660.89 615,660.67 618,660.66 621,660.72" fill="none" stroke="#c0942a" stroke-width="1.7" stroke-linejoin="round"/>
<polyline points="378,717 623,717" fill="none" stroke="#1e7c6a" stroke-width="1.2"/>
<rect x="366.0" y="686.0" width="74" height="33" fill="#323233" stroke="#484849" stroke-width="1" />
<line x1="372" y1="697" x2="384" y2="697" stroke="#1f8068" stroke-width="1" />
<text x="387" y="699.8" font-size="8" fill="#e4e4e4" textLength="46" lengthAdjust="spacingAndGlyphs" stroke="#e4e4e4" stroke-width="0.2" >Absolute (hpa)</text>
<line x1="372" y1="708" x2="384" y2="708" stroke="#b88c2a" stroke-width="1" />
<text x="387" y="711" font-size="8" fill="#e4e4e4" textLength="44" lengthAdjust="spacingAndGlyphs" stroke="#e4e4e4" stroke-width="0.2" >Relative (hpa)</text>
</g>
<g id="light-graph">
<rect x="658.5" y="605.0" width="150" height="135" fill="#2c2c2d" stroke="#464647" stroke-width="1" />
<rect x="658" y="604.5" width="151" height="14" fill="#3f3f40" />
<rect x="659" y="618.5" width="150" height="9.3" fill="#272728" />
<text x="665.6" y="614.1" font-size="8.5" fill="#f0f0f0" font-weight="bold" textLength="17" lengthAdjust="spacingAndGlyphs" stroke="#f0f0f0" stroke-width="0.2" >Light</text>
<rect x="666" y="628" width="140" height="18" fill="#303031" />
<g transform="translate(672.3,632.3)"><rect x="0.55" y="0.55" width="6.9" height="6.7" fill="none" stroke="#ffffff" stroke-width="1.25"/><rect x="2" y="0.4" width="4" height="2.4" fill="#ffffff"/><rect x="1.6" y="4.8" width="4.8" height="1.2" fill="#ffffff"/><path d="M10.4,3.2 h3.2 l-1.6,1.9z" fill="#ffffff"/></g>
<g transform="translate(698.4,636.4) rotate(-42)"><rect x="-4.6" y="-2.1" width="5" height="4.2" rx="1.1" fill="#2fb0d8"/><rect x="-0.5" y="-2.1" width="5" height="4.2" rx="1.1" fill="#ea4a78"/></g>
<g transform="translate(710,632) scale(0.88)"><path d="M0,1.8 h3.4 l1,1.2 h4.6 v6 h-9z" fill="#e09a30"/><path d="M1.6,4.8 h8.8 l-1.8,4.2 h-8.6z" fill="#f7cb62"/><path d="M5.6,1.2 l2.4,-1 l1.6,1.8" fill="none" stroke="#58b858" stroke-width="1.3"/></g>
<rect x="666.5" y="646.5" width="140" height="85.5" fill="#323233" stroke="#555556" stroke-width="1" />
<rect x="686.5" y="654.5" width="120" height="69.5" fill="none" stroke="#404041" stroke-width="1" />
<line x1="687" y1="661.5" x2="810" y2="661.5" stroke="#3d3d3e" stroke-width="1" />
<line x1="687" y1="682.5" x2="810" y2="682.5" stroke="#3d3d3e" stroke-width="1" />
<line x1="687" y1="702.5" x2="810" y2="702.5" stroke="#3d3d3e" stroke-width="1" />
<text x="679" y="663.9" font-size="8" fill="#e4e4e4" text-anchor="end" textLength="7.7" lengthAdjust="spacingAndGlyphs" stroke="#e4e4e4" stroke-width="0.2" >15</text>
<text x="679" y="685.4" font-size="8" fill="#e4e4e4" text-anchor="end" textLength="7.7" lengthAdjust="spacingAndGlyphs" stroke="#e4e4e4" stroke-width="0.2" >10</text>
<text x="679" y="705.4" font-size="8" fill="#e4e4e4" text-anchor="end" textLength="3.85" lengthAdjust="spacingAndGlyphs" stroke="#e4e4e4" stroke-width="0.2" >5</text>
<text x="679" y="725.9" font-size="8" fill="#e4e4e4" text-anchor="end" textLength="3.85" lengthAdjust="spacingAndGlyphs" stroke="#e4e4e4" stroke-width="0.2" >0</text>
<polyline points="697,687 702,688 810,688" fill="none" stroke="#485a94" stroke-width="1.3"/>
<rect x="689.5" y="696.0" width="91" height="24.5" fill="#323233" stroke="#484849" stroke-width="1" />
<line x1="696" y1="708" x2="708" y2="708" stroke="#4c5c90" stroke-width="1" />
<text x="711" y="711" font-size="8" fill="#e4e4e4" textLength="61.5" lengthAdjust="spacingAndGlyphs" stroke="#e4e4e4" stroke-width="0.2" >SkyQuality (MPSAS)</text>
</g>
<rect x="-10" y="749" width="820" height="1" fill="#1c1c1c" />
</g>
</svg>
</body></html>
